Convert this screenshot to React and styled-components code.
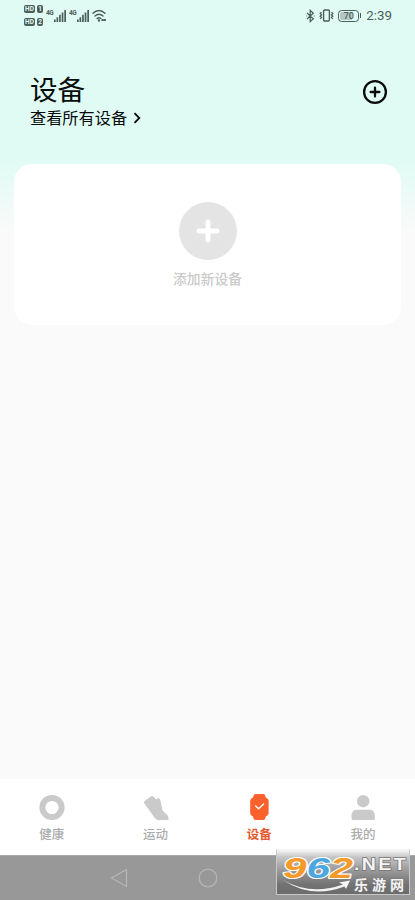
import React, { useState } from "react";
import styled, { createGlobalStyle } from "styled-components";

const GlobalStyle = createGlobalStyle`
    * {
        box-sizing: border-box;
    }
    body {
        margin: 0;
        font-family: "Noto Sans CJK SC", "Noto Sans", sans-serif;
        background: #fafafa;
    }
    svg {
        display: block;
        flex-shrink: 0;
    }
`;

const AppContainer = styled.div`
    position: relative;
    width: 100%;
    height: 100vh;
    min-height: 900px;
    display: flex;
    flex-direction: column;
    overflow: hidden;
    background: linear-gradient(180deg, #e0fbf4 0, #e0fbf4 160px, #fafafa 232px);
`;

const StatusBar = styled.div`
    height: 32px;
    display: flex;
    justify-content: space-between;
    padding: 0 23px 0 24px;
    color: #4c5e5a;
`;
const StatusGroup = styled.div`
    display: flex;
    align-items: center;
    height: 31px;
    gap: ${(props) => props.$gap || 0}px;
`;
const HdStack = styled.div`
    display: flex;
    flex-direction: column;
    gap: 5px;
    margin-right: 3px;
`;
const HdRow = styled.div`
    display: flex;
    gap: 2px;
`;
const HdBadge = styled.span`
    width: ${(props) => (props.$small ? 6 : 11)}px;
    height: 8px;
    border-radius: 2px;
    background: #4c5e5a;
    color: #e0fbf4;
    font-family: Roboto, sans-serif;
    font-size: 6.5px;
    font-weight: 700;
    line-height: 8px;
    text-align: center;
`;
const NetworkLabel = styled.span`
    height: 17px;
    width: 7px;
    margin-right: 1px;
    font-family: Roboto, sans-serif;
    font-size: 6.5px;
    font-weight: 700;
    letter-spacing: -0.5px;
    line-height: 12px;
`;
const Battery = styled.span`
    width: 21px;
    height: 12px;
    border: 1px solid #4c5e5a;
    border-radius: 3.5px;
    background: linear-gradient(90deg, #b3c8c2 68%, #e0fbf4 68%);
    box-shadow: inset 0 0 0 1px #e0fbf4;
    font-family: Roboto, sans-serif;
    font-size: 9px;
    font-weight: 500;
    line-height: 10px;
    text-align: center;
`;
const BatteryTip = styled.span`
    width: 1px;
    height: 5px;
    margin-left: 1px;
    background: #4c5e5a;
`;
const Clock = styled.span`
    margin-left: 5px;
    font-family: Roboto, sans-serif;
    font-size: 13.3px;
    line-height: 16px;
`;

const Header = styled.header`
    height: 132px;
    display: flex;
    justify-content: space-between;
    align-items: flex-start;
    padding: 38px 27px 0 30px;
    color: #080c0b;
`;
const HeaderText = styled.div`
    display: flex;
    flex-direction: column;
`;
const Title = styled.h1`
    margin: 0;
    font-size: 27.5px;
    font-weight: 400;
    line-height: 36px;
`;
const AllDevices = styled.button`
    display: flex;
    align-items: center;
    gap: 6px;
    padding: 0;
    border: 0;
    background: none;
    color: inherit;
    font-family: inherit;
    font-size: 16.2px;
    line-height: 23px;
`;
const IconButton = styled.button`
    display: flex;
    margin-top: 9px;
    padding: 0;
    border: 0;
    background: none;
    color: inherit;
`;

const Content = styled.main`
    flex: 1;
    padding: 0 14px;
`;
const DeviceCard = styled.section`
    height: 161px;
    display: flex;
    flex-direction: column;
    align-items: center;
    padding-top: 37.5px;
    border-radius: 18px;
    background: #ffffff;
`;
const AddCircle = styled.div`
    width: 58px;
    height: 58px;
    display: flex;
    align-items: center;
    justify-content: center;
    border-radius: 50%;
    background: #e4e4e4;
`;
const CardLabel = styled.span`
    margin-top: 8.5px;
    font-size: 13.8px;
    font-weight: 500;
    line-height: 20px;
    color: #cacaca;
`;

const TabBar = styled.nav`
    height: 76px;
    display: grid;
    grid-template-columns: repeat(4, 1fr);
    background: #ffffff;
`;
const Tab = styled.button`
    display: flex;
    flex-direction: column;
    align-items: center;
    justify-content: flex-start;
    gap: 5px;
    padding: 14px 0 0;
    border: 0;
    background: none;
    color: ${(props) => (props.$active ? "#fb602d" : "#cacaca")};
`;
const TabLabel = styled.span`
    font-family: "Noto Sans CJK SC", sans-serif;
    font-size: 12.5px;
    font-weight: ${(props) => (props.$active ? 700 : 500)};
    line-height: 18px;
    color: ${(props) => (props.$active ? "#e65a2f" : "#acacac")};
`;

const SystemBar = styled.div`
    height: 45px;
    display: flex;
    justify-content: center;
    align-items: center;
    gap: 70px;
    padding-right: 88px;
    border-top: 1px solid #a8aaa9;
    background: #989898;
    color: #b5b5b5;
`;

const Watermark = styled.div`
    position: absolute;
    right: 5px;
    bottom: 5px;
    width: 134px;
    height: 46px;
    border: 1px solid #c9c9c9;
    border-top-color: #f2f2f2;
    background: linear-gradient(180deg, #f6f6f6 0, #c6c6c6 16%, #a2a2a2 40%, #737373 78%, #6b6b6b 100%);
`;

const SignalIcon = () => (
    <svg width="12" height="12" viewBox="0 0 12 12" fill="currentColor">
        <path d="M0 9.6h1.7V12H0zM2.5 7.2h1.7V12H2.5zM5.1 4.8h1.7V12H5.1zM7.7 2.4h1.7V12H7.7zM10.3 0H12v12h-1.7z" />
    </svg>
);

const WifiIcon = () => (
    <svg width="15" height="13" viewBox="0 0 15 13" fill="none" stroke="currentColor" strokeWidth="1.4" strokeLinecap="round">
        <path d="M1 4.3Q7 -1.4 13 4.3M3 7Q7 3.5 11 7M5.1 9.6Q7 8 8.8 9.6" />
        <circle cx="7" cy="11.5" r=".5" fill="currentColor" />
        <path d="M10.2 11h.8M12.5 11h.7" strokeWidth="1.8" />
    </svg>
);

const BluetoothIcon = () => (
    <svg width="9" height="14" viewBox="0 0 9 14" fill="none" stroke="currentColor" strokeWidth="1.2">
        <path d="M1 4l6.3 5.8-3.1 2.9V1.3l3.1 2.9L1 10M.3 7h.8M7.8 7h.8" />
    </svg>
);

const VibrateIcon = () => (
    <svg width="15" height="13" viewBox="0 0 15 13" fill="none" stroke="currentColor" strokeWidth="1.4">
        <rect x="4.6" y="1" width="5.8" height="11" rx="1" />
        <path d="M2.5 3.1L1.2 4.4l1.3 1.4-1.3 1.4 1.3 1.4-1.3 1.3M12.5 3.1l1.3 1.3-1.3 1.4 1.3 1.4-1.3 1.4 1.3 1.3" strokeWidth="1.3" />
    </svg>
);

const HealthIcon = () => (
    <svg width="26" height="27" viewBox="0 0 26 27">
        <circle cx="13" cy="14.5" r="9.6" fill="none" stroke="currentColor" strokeWidth="6" />
    </svg>
);

const ShoeIcon = () => (
    <svg width="26" height="27" viewBox="0 0 26 27" fill="currentColor" stroke="currentColor" strokeWidth="2" strokeLinejoin="round">
        <path d="M1.7 9.2L8.6 4l1.7.6 2.4 3 2.9-1.5.6.6 2.4 11.2 5.4 5.3.6 2.8H14.4l-1.6-1.4z" />
    </svg>
);

const WatchIcon = () => (
    <svg width="26" height="27" viewBox="0 0 26 27">
        <path
            d="M7.8 2q.6-1 2-1h7.2q1.4 0 2 1l.8 2.5 1.8 1.3q1 .8 1 2v12.4q0 1.2-1 2l-1.8 1.3-.8 2.4q-.6 1.1-2 1.1H9.8q-1.4 0-2-1.1L7 23.5l-1.8-1.3q-1-.8-1-2V7.8q0-1.2 1-2L7 4.5z"
            fill="currentColor"
        />
        <path d="M9.6 13l3 2.8 5-4.9" fill="none" stroke="#ffffff" strokeWidth="1.4" strokeLinecap="round" strokeLinejoin="round" />
    </svg>
);

const PersonIcon = () => (
    <svg width="26" height="27" viewBox="0 0 26 27" fill="currentColor">
        <circle cx="13.2" cy="8.2" r="6.2" />
        <path d="M7 16.8h12.4c3.8 0 5.5 2.7 5.5 6.5v1.6c0 1.4-.7 2.1-2 2.1H3.5c-1.3 0-2-.7-2-2.1v-1.6c0-3.8 1.7-6.5 5.5-6.5z" />
    </svg>
);

const SiteLogo = () => (
    <svg width="132" height="44" viewBox="0 0 132 44">
        <path d="M6 30Q34 46 66 34.5L62 32.5 73 30.5 69 39 67.5 36.5Q34 49 6 30Z" fill="#f4f4f4" />
        <g
            fontFamily="Liberation Sans, sans-serif"
            fontSize="30"
            fontWeight="700"
            fontStyle="italic"
            strokeLinejoin="round"
            stroke="#ffffff"
            strokeWidth="2.2"
            paintOrder="stroke"
        >
            <text x="6" y="27.5" textLength="23.5" lengthAdjust="spacingAndGlyphs" fill="#f39a2b">9</text>
            <text x="29.5" y="27.5" textLength="23.5" lengthAdjust="spacingAndGlyphs" fill="#4ca6e0">6</text>
            <text x="53" y="27.5" textLength="23" lengthAdjust="spacingAndGlyphs" fill="#f39a2b">2</text>
        </g>
        <g fill="#f4f4f4" stroke="#777777" paintOrder="stroke" fontWeight="700">
            <text x="77" y="19.5" textLength="54" lengthAdjust="spacingAndGlyphs" letterSpacing="2" fontFamily="Liberation Sans, sans-serif" fontSize="16.5" strokeWidth="1.4">
                .NET
            </text>
            <text x="77" y="39.8" textLength="50" fontFamily="Noto Sans CJK SC, sans-serif" fontSize="14" strokeWidth="1">
                乐游网
            </text>
        </g>
    </svg>
);

const tabs = [
    { id: "health", label: "健康", Icon: HealthIcon },
    { id: "sport", label: "运动", Icon: ShoeIcon },
    { id: "device", label: "设备", Icon: WatchIcon },
    { id: "mine", label: "我的", Icon: PersonIcon },
];

const App = () => {
    const [active, setActive] = useState("device");

    return (
        <AppContainer>
            <GlobalStyle />
            <StatusBar>
                <StatusGroup>
                    <HdStack>
                        <HdRow><HdBadge>HD</HdBadge><HdBadge $small>1</HdBadge></HdRow>
                        <HdRow><HdBadge>HD</HdBadge><HdBadge $small>2</HdBadge></HdRow>
                    </HdStack>
                    <StatusGroup $gap={3}>
                        <StatusGroup><NetworkLabel>4G</NetworkLabel><SignalIcon /></StatusGroup>
                        <StatusGroup><NetworkLabel>4G</NetworkLabel><SignalIcon /></StatusGroup>
                        <WifiIcon />
                    </StatusGroup>
                </StatusGroup>
                <StatusGroup>
                    <StatusGroup $gap={4}>
                        <BluetoothIcon />
                        <VibrateIcon />
                        <Battery>70</Battery>
                    </StatusGroup>
                    <BatteryTip />
                    <Clock>2:39</Clock>
                </StatusGroup>
            </StatusBar>
            <Header>
                <HeaderText>
                    <Title>设备</Title>
                    <AllDevices>
                        查看所有设备
                        <svg width="8" height="12" viewBox="0 0 8 12" fill="none" stroke="currentColor" strokeWidth="1.8">
                            <path d="M1.5 1.2L6.3 6l-4.8 4.8" />
                        </svg>
                    </AllDevices>
                </HeaderText>
                <IconButton>
                    <svg width="26" height="26" viewBox="0 0 26 26" fill="none" stroke="currentColor" strokeWidth="2.3" strokeLinecap="round">
                        <circle cx="13" cy="13" r="10.9" />
                        <path d="M13 8.6v8.8M8.6 13h8.8" />
                    </svg>
                </IconButton>
            </Header>
            <Content>
                <DeviceCard>
                    <AddCircle>
                        <svg width="24" height="24" viewBox="0 0 24 24" stroke="#ffffff" strokeWidth="4.8" strokeLinecap="round">
                            <path d="M12 2.8v18.4M2.8 12h18.4" />
                        </svg>
                    </AddCircle>
                    <CardLabel>添加新设备</CardLabel>
                </DeviceCard>
            </Content>
            <TabBar>
                {tabs.map(({ id, label, Icon }) => (
                    <Tab key={id} $active={active === id} onClick={() => setActive(id)}>
                        <Icon />
                        <TabLabel $active={active === id}>{label}</TabLabel>
                    </Tab>
                ))}
            </TabBar>
            <SystemBar>
                <svg width="18" height="20" viewBox="0 0 18 20" fill="none" stroke="currentColor" strokeWidth="1.3" strokeLinejoin="round">
                    <path d="M16.5 1.5v17L1.5 10z" />
                </svg>
                <svg width="20" height="20" viewBox="0 0 20 20" fill="none" stroke="currentColor" strokeWidth="1.3">
                    <circle cx="10" cy="10" r="8.8" />
                </svg>
            </SystemBar>
            <Watermark>
                <SiteLogo />
            </Watermark>
        </AppContainer>
    );
};

export default App;
